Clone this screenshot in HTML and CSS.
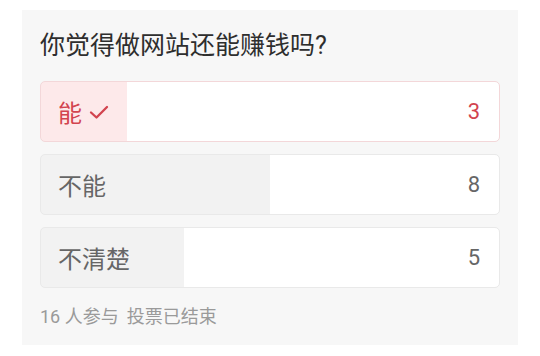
FILE: index.html
```html
<!DOCTYPE html>
<html lang="zh-CN">
<head>
<meta charset="utf-8">
<link rel="stylesheet" href="styles.css">
</head>
<body>
<div class="poll">
  <h2 class="poll-title">你觉得做网站还能赚钱吗?</h2>
  <div class="options">
    <div class="option selected" style="--pct: 18.75%">
      <span class="label">能<svg class="check" viewBox="0 0 20 16" width="20" height="16"><path d="M2 8.5 L7.5 13.5 L18 3" fill="none" stroke="currentColor" stroke-width="2.3" stroke-linecap="round" stroke-linejoin="round"/></svg></span>
      <span class="count">3</span>
    </div>
    <div class="option" style="--pct: 50%">
      <span class="label">不能</span>
      <span class="count">8</span>
    </div>
    <div class="option" style="--pct: 31.25%">
      <span class="label">不清楚</span>
      <span class="count">5</span>
    </div>
  </div>
  <div class="poll-footer"><span>16 人参与</span><span>投票已结束</span></div>
</div>
</body>
</html>
```
FILE: styles.css
```css
html, body {
  margin: 0;
  padding: 0;
  background: #ffffff;
}
body {
  padding: 10px 22px 11px 22px;
  font-family: Roboto, "Noto Sans CJK SC", sans-serif;
}
.poll {
  width: 496px;
  box-sizing: border-box;
  background: #f7f7f7;
  padding: 18px 18px 17px 18px;
}
.poll-title {
  margin: 0 0 17px 0;
  font-size: 25px;
  font-weight: 400;
  line-height: 36px;
  color: #2e2e2e;
}
.options {
  display: flex;
  flex-direction: column;
  gap: 12px;
}
.option {
  height: 61px;
  box-sizing: border-box;
  border: 1px solid #e9e9e9;
  border-radius: 5px;
  display: flex;
  align-items: center;
  justify-content: space-between;
  padding: 0 19px 0 17px;
  background: linear-gradient(to right, #f2f2f2 var(--pct), #ffffff var(--pct));
  color: #666666;
  font-size: 24px;
}
.option.selected {
  border-color: #f3d7d9;
  background: linear-gradient(to right, #fde9ea var(--pct), #ffffff var(--pct));
  color: #d2444f;
}
.label {
  display: flex;
  align-items: center;
  gap: 7px;
}
.check {
  display: block;
}
.count {
  font-size: 22px;
}
.poll-footer {
  margin-top: 18px;
  font-size: 18px;
  line-height: 22px;
  color: #9a9a9a;
  display: flex;
  gap: 8px;
}
```
